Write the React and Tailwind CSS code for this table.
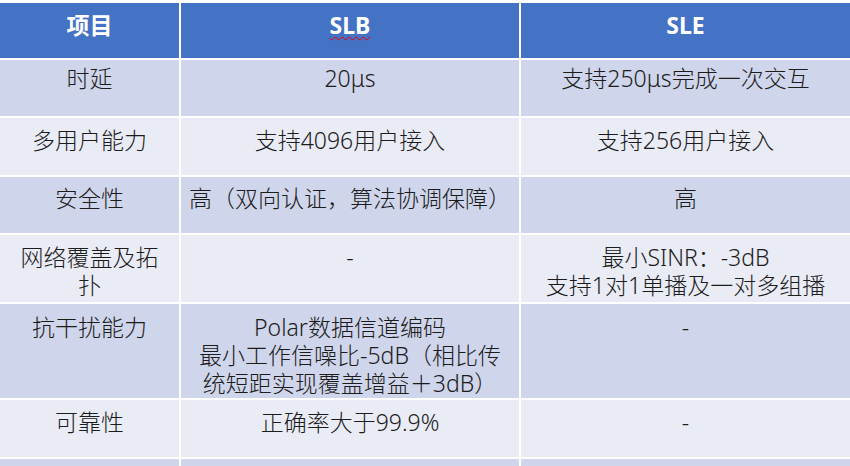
const rows = [
  { h: "h-[56px]", pt: "pt-[4px]", cells: [["时延"], ["20μs"], ["支持250μs完成一次交互"]] },
  { h: "h-[57px]", pt: "pt-[8px]", cells: [["多用户能力"], ["支持4096用户接入"], ["支持256用户接入"]] },
  { h: "h-[56px]", pt: "pt-[7px]", cells: [["安全性"], ["高（双向认证，算法协调保障）"], ["高"]] },
  { h: "h-[67px]", pt: "pt-[8px]", cells: [["网络覆盖及拓", "扑"], ["-"], ["最小SINR：-3dB", "支持1对1单播及一对多组播"]] },
  {
    h: "h-[94px]",
    pt: "pt-[9px]",
    cells: [
      ["抗干扰能力"],
      ["Polar数据信道编码", "最小工作信噪比-5dB（相比传", "统短距实现覆盖增益＋3dB）"],
      ["-"],
    ],
  },
  { h: "h-[57px]", pt: "pt-[8px]", cells: [["可靠性"], ["正确率大于99.9%"], ["-"]] },
  { h: "h-[40px]", pt: "pt-[8px]", cells: [[""], [""], [""]] },
];

function Cell({ lines, bg, pt }) {
  return (
    <div className={`${bg} ${pt} px-1 text-center text-[23px] font-light leading-[28px] text-[#1c1c1c]`}>
      {lines.map((l, i) => (
        <div key={i} className="whitespace-nowrap">
          {l}
        </div>
      ))}
    </div>
  );
}

export default function App() {
  return (
    <div
      className="h-[466px] w-[850px] overflow-hidden bg-white pt-[3px]"
      style={{ fontFamily: '"Noto Sans", "Noto Sans CJK SC", sans-serif' }}
    >
      <div className="flex flex-col gap-[2px]">
        <div className="grid h-[55px] grid-cols-[179px_338px_329px] gap-[2px]">
          <div className="bg-[#4472c4] pt-[8px] text-center text-[23px] font-bold leading-[28px] text-white">项目</div>
          <div className="bg-[#4472c4] pt-[8px] text-center text-[23px] font-bold leading-[28px] text-white">
            <span className="underline decoration-red-600 decoration-wavy decoration-1 underline-offset-2">SLB</span>
          </div>
          <div className="bg-[#4472c4] pt-[8px] text-center text-[23px] font-bold leading-[28px] text-white">SLE</div>
        </div>
        {rows.map((r, i) => {
          const bg = i % 2 === 0 ? "bg-[#cfd5ea]" : "bg-[#e9ebf5]";
          return (
            <div key={i} className={`grid ${r.h} grid-cols-[179px_338px_329px] gap-[2px]`}>
              {r.cells.map((c, j) => (
                <Cell key={j} lines={c} bg={bg} pt={r.pt} />
              ))}
            </div>
          );
        })}
      </div>
    </div>
  );
}
